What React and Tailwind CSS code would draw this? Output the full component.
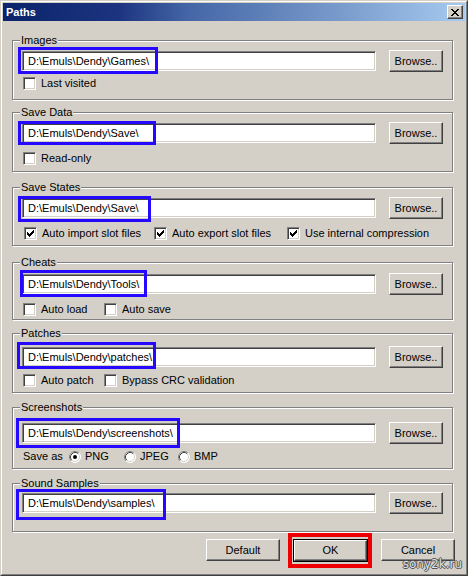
import React from "react";

const font = "font-['Liberation_Sans',Arial,sans-serif]";

function CheckMark() {
  // classic 7x7 pixel tick
  const px = [[6,0],[5,1],[6,1],[0,2],[4,2],[5,2],[6,2],[0,3],[1,3],[3,3],[4,3],[5,3],[0,4],[1,4],[2,4],[3,4],[4,4],[1,5],[2,5],[3,5],[2,6]];
  return (
    <svg width="7" height="7" viewBox="0 0 7 7" shapeRendering="crispEdges">
      {px.map(([x, y]) => <rect key={`${x}-${y}`} x={x} y={y} width="1" height="1" fill="#000" />)}
    </svg>
  );
}

function Check({ label, checked, className = "" }) {
  return (
    <div className={`flex items-center ${className}`}>
      <span className="w-[13px] h-[13px] shrink-0 bg-white border border-t-[#808080] border-l-[#808080] border-b-white border-r-white shadow-[inset_1px_1px_0_#404040,inset_-1px_-1px_0_#d4d0c8] flex items-center justify-center">
        {checked && <CheckMark />}
      </span>
      <span className="ml-[5px] leading-[13px]">{label}</span>
    </div>
  );
}

function Radio({ label, checked, className = "" }) {
  return (
    <div className={`flex items-center ${className}`}>
      <svg width="12" height="12" viewBox="0 0 12 12" className="shrink-0">
        <circle cx="6" cy="6" r="5.5" fill="#fff" />
        <path d="M2.11 9.89 A5.5 5.5 0 0 1 9.89 2.11" stroke="#808080" fill="none" />
        <path d="M9.89 2.11 A5.5 5.5 0 0 1 2.11 9.89" stroke="#fff" fill="none" />
        <path d="M2.82 9.18 A4.5 4.5 0 0 1 9.18 2.82" stroke="#404040" fill="none" />
        <path d="M9.18 2.82 A4.5 4.5 0 0 1 2.82 9.18" stroke="#d4d0c8" fill="none" />
        {checked && <circle cx="6" cy="6" r="2" fill="#000" />}
      </svg>
      <span className="ml-[4px] leading-[13px]">{label}</span>
    </div>
  );
}

function Btn({ children, className = "" }) {
  return (
    <div className={`flex items-center justify-center bg-[#d4d0c8] border border-t-white border-l-white border-r-[#404040] border-b-[#404040] shadow-[inset_-1px_-1px_0_#808080] leading-[13px] ${className}`}>
      {children}
    </div>
  );
}

function Group({ label, className, children }) {
  return (
    <div className={`relative w-[441px] ml-[9px] border border-[#808080] shadow-[inset_1px_1px_0_#fff,1px_1px_0_#fff] ${className}`}>
      <span className="absolute left-[7px] -top-[7px] px-[1px] bg-[#d4d0c8] leading-[13px]">{label}</span>
      {children}
    </div>
  );
}

function PathRow({ path, box, className }) {
  return (
    <div className={`flex items-center ${className}`}>
      <div className="relative ml-[9px] w-[354px] h-[20px] bg-white border border-t-[#808080] border-l-[#808080] border-b-white border-r-white shadow-[inset_1px_1px_0_#404040,inset_-1px_-1px_0_#d4d0c8] flex items-center pl-[5px] leading-[13px]">
        {path}
        <div className={`absolute border-[3px] border-[#2408ff] ${box}`} />
      </div>
      <Btn className="ml-[13px] w-[54px] h-[22px]">Browse..</Btn>
    </div>
  );
}

export default function App() {
  return (
    <div className={`${font} text-[11px] text-black w-[468px] h-[576px] relative border border-t-[#d4d0c8] border-l-[#d4d0c8] border-r-[#404040] border-b-[#404040]`}>
      <div className="h-full border border-t-white border-l-white border-r-[#808080] border-b-[#808080] bg-[#d4d0c8] p-[1px]">
        {/* title bar */}
        <div className="h-[18px] flex items-center justify-between bg-[linear-gradient(90deg,#0a246a_0%,#1c3480_25%,#4466a6_40%,#7496c8_70%,#a6caf0_100%)]">
          <span className="ml-[3px] text-white font-bold leading-[13px]">Paths</span>
          <div className="mr-[2px] w-[16px] h-[14px] flex items-center justify-center bg-[#d4d0c8] border border-t-white border-l-white border-r-[#404040] border-b-[#404040] shadow-[inset_-1px_-1px_0_#808080]">
            <svg width="8" height="7" viewBox="0 0 8 7" shapeRendering="crispEdges">
              <path d="M0 0h2v1h-2zM6 0h2v1h-2zM1 1h2v1h-2zM5 1h2v1h-2zM2 2h4v1h-4zM3 3h2v1h-2zM2 4h4v1h-4zM1 5h2v1h-2zM5 5h2v1h-2zM0 6h2v1h-2zM6 6h2v1h-2z" fill="#000" />
            </svg>
          </div>
        </div>

        <Group label="Images" className="mt-[19px] h-[60px]">
          <PathRow path={"D:\\Emuls\\Dendy\\Games\\"} className="mt-[9px]" box="-left-[5px] -top-[5px] w-[140px] h-[27px]" />
          <Check label="Last visited" className="mt-[5px] ml-[10px]" />
        </Group>

        <Group label="Save Data" className="mt-[12px] h-[60px]">
          <PathRow path={"D:\\Emuls\\Dendy\\Save\\"} className="mt-[9px]" box="-left-[5px] -top-[3px] w-[138px] h-[24px]" />
          <Check label="Read-only" className="mt-[8px] ml-[10px]" />
        </Group>

        <Group label="Save States" className="mt-[15px] h-[59px]">
          <PathRow path={"D:\\Emuls\\Dendy\\Save\\"} className="mt-[9px]" box="-left-[5px] -top-[3px] w-[133px] h-[26px]" />
          <div className="flex mt-[8px] ml-[11px]">
            <Check label="Auto import slot files" checked className="w-[130px]" />
            <Check label="Auto export slot files" checked className="w-[133px]" />
            <Check label="Use internal compression" checked />
          </div>
        </Group>

        <Group label="Cheats" className="mt-[16px] h-[58px]">
          <PathRow path={"D:\\Emuls\\Dendy\\Tools\\"} className="mt-[10px]" box="-left-[3px] -top-[5px] w-[127px] h-[27px]" />
          <div className="flex mt-[8px] ml-[10px]">
            <Check label="Auto load" className="w-[81px]" />
            <Check label="Auto save" />
          </div>
        </Group>

        <Group label="Patches" className="mt-[13px] h-[60px]">
          <PathRow path={"D:\\Emuls\\Dendy\\patches\\"} className="mt-[12px]" box="-left-[6px] -top-[6px] w-[139px] h-[27px]" />
          <div className="flex mt-[6px] ml-[10px]">
            <Check label="Auto patch" className="w-[81px]" />
            <Check label="Bypass CRC validation" />
          </div>
        </Group>

        <Group label="Screenshots" className="mt-[14px] h-[62px]">
          <PathRow path={"D:\\Emuls\\Dendy\\screenshots\\"} className="mt-[14px]" box="-left-[7px] -top-[6px] w-[164px] h-[30px]" />
          <div className="flex items-center mt-[6px] ml-[10px]">
            <span className="w-[46px] leading-[13px]">Save as</span>
            <Radio label="PNG" checked className="w-[55px]" />
            <Radio label="JPEG" className="w-[54px]" />
            <Radio label="BMP" />
          </div>
        </Group>

        <Group label="Sound Samples" className="mt-[14px] h-[49px]">
          <PathRow path={"D:\\Emuls\\Dendy\\samples\\"} className="mt-[8px]" box="-left-[7px] -top-[5px] w-[150px] h-[31px]" />
        </Group>

        <div className="flex mt-[7px] ml-[203px]">
          <Btn className="w-[74px] h-[22px]">Default</Btn>
          <div className="relative ml-[13px] w-[75px] h-[23px] border border-black">
            <Btn className="w-full h-full">OK</Btn>
            <div className="absolute -left-[6px] -top-[7px] w-[84px] h-[35px] border-[4px] border-[#ee0000]" />
          </div>
          <Btn className="ml-[13px] w-[74px] h-[22px]">Cancel</Btn>
        </div>
      </div>

      <span className="absolute right-[5px] bottom-[4px] font-['DejaVu_Sans',Verdana,sans-serif] text-[12px] leading-[14px] text-[#dde0ea] [text-shadow:1px_0_0_#555,-1px_0_0_#555,0_1px_0_#555,0_-1px_0_#555]">
        sony2k.ru
      </span>
    </div>
  );
}
